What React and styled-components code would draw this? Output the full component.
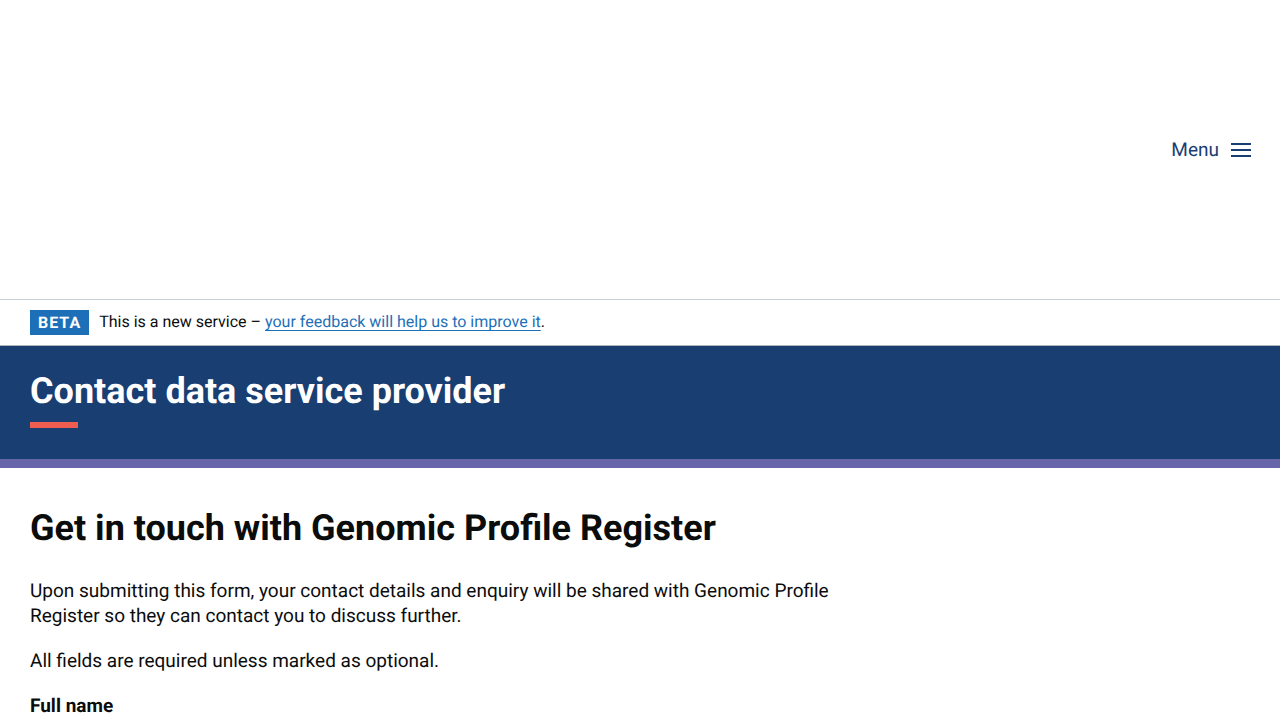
import React from "react";
import styled, { createGlobalStyle } from "styled-components";

const GlobalStyle = createGlobalStyle`
  *, *::before, *::after { box-sizing: border-box; }
  body {
    margin: 0;
    background: #ffffff;
    color: #0b0c0c;
    font-family: Roboto, "Liberation Sans", sans-serif;
    font-size: 19px;
    line-height: 25px;
    text-rendering: geometricPrecision;
  }
`;

const Header = styled.header`
  display: flex;
  align-items: center;
  justify-content: flex-end;
  min-height: 300px;
  padding: 0 29px 0 30px;
  border-bottom: 1px solid #c8d0d6;
`;

const MenuButton = styled.button`
  display: flex;
  align-items: center;
  gap: 12px;
  padding: 0;
  border: 0;
  background: none;
  color: #193e72;
  font: inherit;
  text-rendering: inherit;
  cursor: pointer;
`;

const PhaseBanner = styled.section`
  display: flex;
  align-items: flex-start;
  gap: 10px;
  padding: 10px 30px;
  border-bottom: 1px solid #b1b4b6;
  font-size: 16px;
  line-height: 24px;
`;

const Tag = styled.strong`
  padding: 0 8px;
  background: #1d70b8;
  color: #ffffff;
  line-height: 25px;
  letter-spacing: 1px;
`;

const PhaseText = styled.p`
  margin: 0;
`;

const FeedbackLink = styled.a`
  color: #1d70b8;
  text-decoration: underline;
  text-decoration-thickness: 1px;
  text-decoration-skip-ink: none;
  text-underline-offset: 3px;
`;

const TitleBar = styled.section`
  padding: 20px 30px 31px;
  background: #193e72;
  border-bottom: 9px solid #6866ab;
  color: #ffffff;
`;

const Heading = styled.h1`
  margin: 0;
  font-size: 36px;
  line-height: 50px;
  font-weight: 700;
`;

const Accent = styled.div`
  width: 48px;
  height: 6px;
  margin-top: 6px;
  background: #ee5d4f;
`;

const Main = styled.main`
  padding: 35px 30px 30px;
`;

const Column = styled.div`
  max-width: 820px;
`;

const Paragraph = styled.p`
  margin: 0 0 20px;
`;

const Intro = styled.div`
  margin-top: 25px;
`;

const Label = styled.label`
  display: block;
  margin-bottom: 5px;
  font-weight: 700;
`;

const TextInput = styled.input`
  width: 100%;
  height: 40px;
  padding: 5px;
  border: 2px solid #0b0c0c;
  font: inherit;
`;

export default function App() {
  return (
    <>
      <GlobalStyle />
      <Header>
        <MenuButton type="button">
          Menu
          <svg width="20" height="14" viewBox="0 0 20 14" fill="none" stroke="currentColor" strokeWidth="2" aria-hidden="true">
            <path d="M0 1h20M0 7h20M0 13h20" />
          </svg>
        </MenuButton>
      </Header>
      <PhaseBanner>
        <Tag>BETA</Tag>
        <PhaseText>
          This is a new service – <FeedbackLink href="#feedback">your feedback will help us to improve it</FeedbackLink>.
        </PhaseText>
      </PhaseBanner>
      <TitleBar>
        <Heading>Contact data service provider</Heading>
        <Accent />
      </TitleBar>
      <Main>
        <Column>
          <Heading as="h2">Get in touch with Genomic Profile Register</Heading>
          <Intro>
            <Paragraph>
              Upon submitting this form, your contact details and enquiry will be shared with Genomic Profile Register so they can contact you to discuss further.
            </Paragraph>
            <Paragraph>All fields are required unless marked as optional.</Paragraph>
          </Intro>
          <Label htmlFor="full-name">Full name</Label>
          <TextInput id="full-name" name="fullName" type="text" autoComplete="name" />
        </Column>
      </Main>
    </>
  );
}
